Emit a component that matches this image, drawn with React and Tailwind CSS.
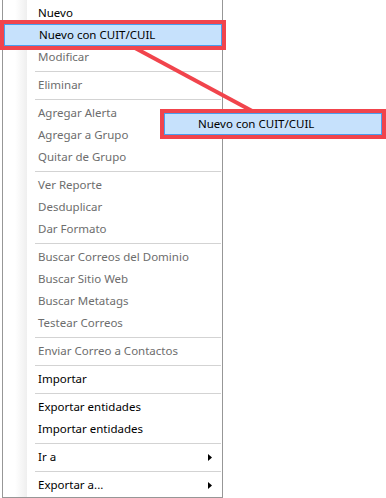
import React from 'react';

const menu = [
  { label: 'Nuevo' },
  { label: 'Nuevo con CUIT/CUIL', active: true },
  { label: 'Modificar', disabled: true },
  { sep: true },
  { label: 'Eliminar', disabled: true },
  { sep: true },
  { label: 'Agregar Alerta', disabled: true },
  { label: 'Agregar a Grupo', disabled: true },
  { label: 'Quitar de Grupo', disabled: true },
  { sep: true },
  { label: 'Ver Reporte', disabled: true },
  { label: 'Desduplicar', disabled: true },
  { label: 'Dar Formato', disabled: true },
  { sep: true },
  { label: 'Buscar Correos del Dominio', disabled: true },
  { label: 'Buscar Sitio Web', disabled: true },
  { label: 'Buscar Metatags', disabled: true },
  { label: 'Testear Correos', disabled: true },
  { sep: true },
  { label: 'Enviar Correo a Contactos', disabled: true },
  { sep: true },
  { label: 'Importar' },
  { sep: true },
  { label: 'Exportar entidades' },
  { label: 'Importar entidades' },
  { sep: true },
  { label: 'Ir a', submenu: true },
  { sep: true },
  { label: 'Exportar a...', submenu: true },
];

const Arrow = () => (
  <svg width="4" height="7" viewBox="0 0 4 7" className="ml-auto mr-[10px]">
    <path d="M0 0 L4 3.5 L0 7 Z" fill="#000" />
  </svg>
);

const App = () => {
  return (
    <div className="relative w-[386px] h-[498px] bg-white overflow-hidden text-[11.5px] font-['Noto_Sans',sans-serif]">
      {/* Context menu */}
      <div className="ml-[2px] w-[221px] h-[498px] border-x border-b border-[#979797] bg-[linear-gradient(to_right,#fff_12px,#efefef_24px,#fff_24px)] pt-[2px] flex flex-col">
        {menu.map((item, i) =>
          item.sep ? (
            <div key={i} className="h-[6px] pt-[3px] pl-[32px] pr-[1px]">
              <div className="h-px bg-[#d3d3d3]"></div>
            </div>
          ) : (
            <div
              key={i}
              className={
                'h-[22px] flex items-center leading-none ' +
                (item.active
                  ? 'ml-px pl-[34px] bg-[#c6e1fc] border border-[#4a9ded]'
                  : 'pl-[35px]') +
                (item.disabled ? ' text-[#6d6d6d]' : ' text-black')
              }
            >
              {item.label}
              {item.submenu && <Arrow />}
            </div>
          )
        )}
      </div>

      {/* Annotation */}
      <svg className="absolute inset-0" width="386" height="498">
        <line x1="135" y1="48" x2="254" y2="112" stroke="#f1444c" strokeWidth="4" />
      </svg>
      <div className="absolute left-0 top-[20px] w-[226px] h-[30px] border-4 border-[#f1444c]"></div>
      <div className="absolute left-[160px] top-[109px] w-[226px] h-[30px] border-4 border-[#f1444c] bg-white">
        <div className="h-[22px] flex items-center pl-[33px] bg-[#c6e1fc] border border-[#4a9ded] text-black leading-none">
          Nuevo con CUIT/CUIL
        </div>
      </div>
    </div>
  );
};

export default App;
